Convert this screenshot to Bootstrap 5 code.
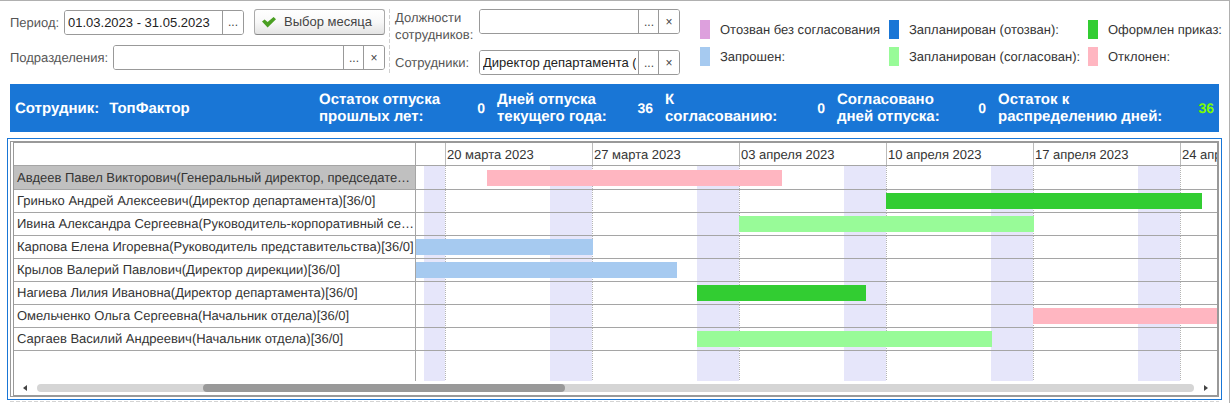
<!DOCTYPE html>
<html lang="ru">
<head>
<meta charset="utf-8">
<meta name="viewport" content="width=device-width, initial-scale=1">
<title>График отпусков</title>
<link href="https://cdn.jsdelivr.net/npm/bootstrap@5.3.0/dist/css/bootstrap.min.css" rel="stylesheet">
<style>
  :root { --line: #a5a5a5; --blue: #1976d6; }
  body { font: 13px/17px "Liberation Sans", Arial, sans-serif; text-rendering: geometricPrecision; color: #333; background: #fff; overflow: hidden; }
  .page { border-top: 1px solid #b0b0b0; border-right: 1px solid #b0b0b0; margin-right: 1px; padding: 8px 10px 0 10px; min-height: 100vh; }
  .filters { height: 75px; }
  .filters label { color: #555; }
  .left-filters { flex: 0 0 375px; gap: 10px; }
  .mid-filters { flex: 0 0 285px; margin-left: 5px; gap: 7px; }
  .dash-v { flex: 0 0 1px; height: 64px; margin-left: 4px; background: repeating-linear-gradient(#d0d0d0 0 4px, transparent 4px 6px); }
  .label-s { flex: 0 0 54px; } .label-m { flex: 0 0 84px; } .label-l { flex: 0 0 103px; }
  .picker { height: 25px; flex-wrap: nowrap; border: 1px solid #999; border-radius: 3px; overflow: hidden; }
  .picker.period { width: 180px; }
  .picker .form-control { font-size: 13px; line-height: 17px; padding: 0 3px; border: 0; border-radius: 0; color: #222; min-height: 0; background: #fff; }
  .picker > .btn.btn { flex: 0 0 21px; padding: 0; margin: 0; border: 0; border-left: 1px solid #999; border-radius: 0; font-size: 12px; line-height: 20px; color: #444; background: #fff; }
  .month-btn { width: 131px; height: 26px; padding: 0 7px; white-space: nowrap; border: 1px solid #aaa; border-bottom-color: #888; border-radius: 3px; background: linear-gradient(#fff, #f8f8f8 50%, #e4e4e4); font-size: 13px; line-height: 20px; color: #444; }
  .month-btn svg { flex: none; }
  .legend-grid { display: grid; grid-template-columns: minmax(0, 189fr) minmax(0, 199fr) minmax(0, 131fr); row-gap: 8px; margin-left: 20px; padding-top: 11px; }
  .legend-grid .item { display: flex; align-items: center; gap: 10px; white-space: nowrap; height: 19px; }
  .swatch { width: 10px; height: 19px; flex: none; }
  .revoked { background: #dda0dd; } .planned { background: var(--blue); } .ordered { background: #32cd32; }
  .asked { background: #a6caf0; } .agreed { background: #98fb98; } .rejected { background: #ffb6c1; }
  .summary { display: grid; grid-template-columns: 304fr 178fr 168fr 172fr 161fr 216fr; height: 48px; padding: 0 5px; background: var(--blue); color: #fff; font-size: 15px; line-height: 17px; font-weight: 700; }
  .summary > div { display: flex; align-items: center; justify-content: space-between; padding-right: 12px; white-space: nowrap; }
  .summary > div:first-child { justify-content: start; gap: 10px; }
  .summary > div:last-child { padding-right: 0; }
  .summary .num { font-size: 14px; }
  .num.good { color: #7cfc00; }
  .frame-a { margin: 6px -3px 0; border: 1px solid var(--blue); padding: 2px; }
  .frame-b { border: 1px solid #999; padding-left: 2px; }
  .frame-c { border: 1px solid #999; }
  .gantt { width: 100%; table-layout: fixed; border-collapse: separate; border-spacing: 0; }
  .names-col { width: 402px; }
  .gantt th, .gantt td { padding: 0; font-weight: 400; height: 23px; border-bottom: 1px solid var(--line); }
  .gantt tr > :first-child { border-right: 1px solid var(--line); }
  .gantt tbody th { padding: 0 0 0 3px; line-height: 22px; }
  .gantt tbody tr:first-child > * { height: 24px; }
  .gantt tbody tr.picked th { background: #c0c0c0; }
  .gantt tfoot td { height: 30px; border-bottom: 0; }
  .weeks { height: 22px; padding-left: 29px; }
  .weeks span { flex: 0 0 147px; border-left: 1px solid #bbb; padding-left: 1px; line-height: 23px; white-space: nowrap; }
  .track {
    background:
      conic-gradient(at 1px 1px, transparent 270deg, #b4b4b4 270deg) 29px 0 / 147px 2px,
      linear-gradient(#fff, #fff) 0 0 / 8px 100% no-repeat,
      linear-gradient(90deg, #e6e6fa 42px, transparent 42px) -13px 0 / 147px 100%;
  }
  .task-bar { height: 16px; }
  .scroller { height: 14px; padding: 0 9px; gap: 9px; }
  .rail { height: 8px; border-radius: 4px; background: #d5d5d5; }
  .thumb { height: 8px; border-radius: 4px; background: #999; }
  .dash-h { height: 1px; margin-top: 1px; background: repeating-linear-gradient(90deg, #d4d4d4 0 4px, transparent 4px 6px); }
</style>
</head>
<body>
<main class="page">
  <form class="filters d-flex">
    <div class="left-filters d-flex flex-column">
      <div class="d-flex align-items-center">
        <label for="period" class="label-s">Период:</label>
        <div class="input-group picker period">
          <input id="period" class="form-control" value="01.03.2023 - 31.05.2023">
          <button type="button" class="btn" aria-label="Выбрать период">...</button>
        </div>
        <button type="button" class="btn month-btn ms-auto d-flex align-items-center gap-2">
          <svg width="14" height="11" viewBox="0 0 14 11" aria-hidden="true"><path d="M0 4.6 2.6 2.4 5.6 5 11.6 0 14 2.2 5.6 10.6Z" fill="#4a9f22"/></svg>
          Выбор месяца
        </button>
      </div>
      <div class="d-flex align-items-center">
        <label for="units" class="label-l">Подразделения:</label>
        <div class="input-group picker">
          <input id="units" class="form-control">
          <button type="button" class="btn" aria-label="Выбрать подразделения">...</button>
          <button type="button" class="btn" aria-label="Очистить подразделения">×</button>
        </div>
      </div>
    </div>
    <div class="dash-v"></div>
    <div class="mid-filters d-flex flex-column">
      <div class="d-flex">
        <label for="posts" class="label-m">Должности<br>сотрудников:</label>
        <div class="input-group picker">
          <input id="posts" class="form-control">
          <button type="button" class="btn" aria-label="Выбрать должности">...</button>
          <button type="button" class="btn" aria-label="Очистить должности">×</button>
        </div>
      </div>
      <div class="d-flex align-items-center">
        <label for="staff" class="label-m">Сотрудники:</label>
        <div class="input-group picker">
          <input id="staff" class="form-control" value="Директор департамента (Гринько)">
          <button type="button" class="btn" aria-label="Выбрать сотрудников">...</button>
          <button type="button" class="btn" aria-label="Очистить сотрудников">×</button>
        </div>
      </div>
    </div>
    <div class="legend-grid flex-grow-1 align-content-start">
      <div class="item"><span class="swatch revoked"></span>Отозван без согласования</div>
      <div class="item"><span class="swatch planned"></span>Запланирован (отозван):</div>
      <div class="item"><span class="swatch ordered"></span>Оформлен приказ:</div>
      <div class="item"><span class="swatch asked"></span>Запрошен:</div>
      <div class="item"><span class="swatch agreed"></span>Запланирован (согласован):</div>
      <div class="item"><span class="swatch rejected"></span>Отклонен:</div>
    </div>
  </form>

  <section class="summary">
    <div><span>Сотрудник:</span><span>ТопФактор</span></div>
    <div><span>Остаток отпуска<br>прошлых лет:</span><span class="num">0</span></div>
    <div><span>Дней отпуска<br>текущего года:</span><span class="num">36</span></div>
    <div><span>К<br>согласованию:</span><span class="num">0</span></div>
    <div><span>Согласовано<br>дней отпуска:</span><span class="num">0</span></div>
    <div><span>Остаток к<br>распределению дней:</span><span class="num good">36</span></div>
  </section>

  <section class="frame-a"><div class="frame-b"><div class="frame-c">
    <table class="gantt">
      <colgroup><col class="names-col"><col></colgroup>
      <thead>
        <tr><td></td><th><div class="weeks d-flex overflow-hidden"><span>20 марта 2023</span><span>27 марта 2023</span><span>03 апреля 2023</span><span>10 апреля 2023</span><span>17 апреля 2023</span><span>24 апреля 2023</span></div></th></tr>
      </thead>
      <tbody>
        <tr class="picked"><th class="text-truncate">Авдеев Павел Викторович(Генеральный директор, председатель правления)[36/0]</th><td class="track"><div class="overflow-hidden"><div class="task-bar rejected" style="margin-left:71px;width:295px"></div></div></td></tr>
        <tr><th class="text-truncate">Гринько Андрей Алексеевич(Директор департамента)[36/0]</th><td class="track"><div class="overflow-hidden"><div class="task-bar ordered" style="margin-left:470px;width:316px"></div></div></td></tr>
        <tr><th class="text-truncate">Ивина Александра Сергеевна(Руководитель-корпоративный секретарь)[36/0]</th><td class="track"><div class="overflow-hidden"><div class="task-bar agreed" style="margin-left:323px;width:295px"></div></div></td></tr>
        <tr><th class="text-truncate">Карпова Елена Игоревна(Руководитель представительства)[36/0]</th><td class="track"><div class="overflow-hidden"><div class="task-bar asked" style="width:177px"></div></div></td></tr>
        <tr><th class="text-truncate">Крылов Валерий Павлович(Директор дирекции)[36/0]</th><td class="track"><div class="overflow-hidden"><div class="task-bar asked" style="width:261px"></div></div></td></tr>
        <tr><th class="text-truncate">Нагиева Лилия Ивановна(Директор департамента)[36/0]</th><td class="track"><div class="overflow-hidden"><div class="task-bar ordered" style="margin-left:281px;width:169px"></div></div></td></tr>
        <tr><th class="text-truncate">Омельченко Ольга Сергеевна(Начальник отдела)[36/0]</th><td class="track"><div class="overflow-hidden"><div class="task-bar rejected" style="margin-left:617px;width:295px"></div></div></td></tr>
        <tr><th class="text-truncate">Саргаев Василий Андреевич(Начальник отдела)[36/0]</th><td class="track"><div class="overflow-hidden"><div class="task-bar agreed" style="margin-left:281px;width:295px"></div></div></td></tr>
      </tbody>
      <tfoot><tr><td></td><td class="track"></td></tr></tfoot>
    </table>
    <div class="scroller d-flex align-items-center">
      <svg width="5" height="6" viewBox="0 0 5 6" aria-hidden="true"><path d="M4 0v6L0 3Z" fill="#444"/></svg>
      <div class="rail flex-grow-1"><div class="thumb" style="margin-left:14.35%;width:31.3%"></div></div>
      <svg width="5" height="6" viewBox="0 0 5 6" aria-hidden="true"><path d="M1 0v6L5 3Z" fill="#444"/></svg>
    </div>
  </div></div></section>
  <div class="dash-h"></div>
</main>
<script src="https://cdn.jsdelivr.net/npm/bootstrap@5.3.0/dist/js/bootstrap.bundle.min.js"></script>
</body>
</html>
